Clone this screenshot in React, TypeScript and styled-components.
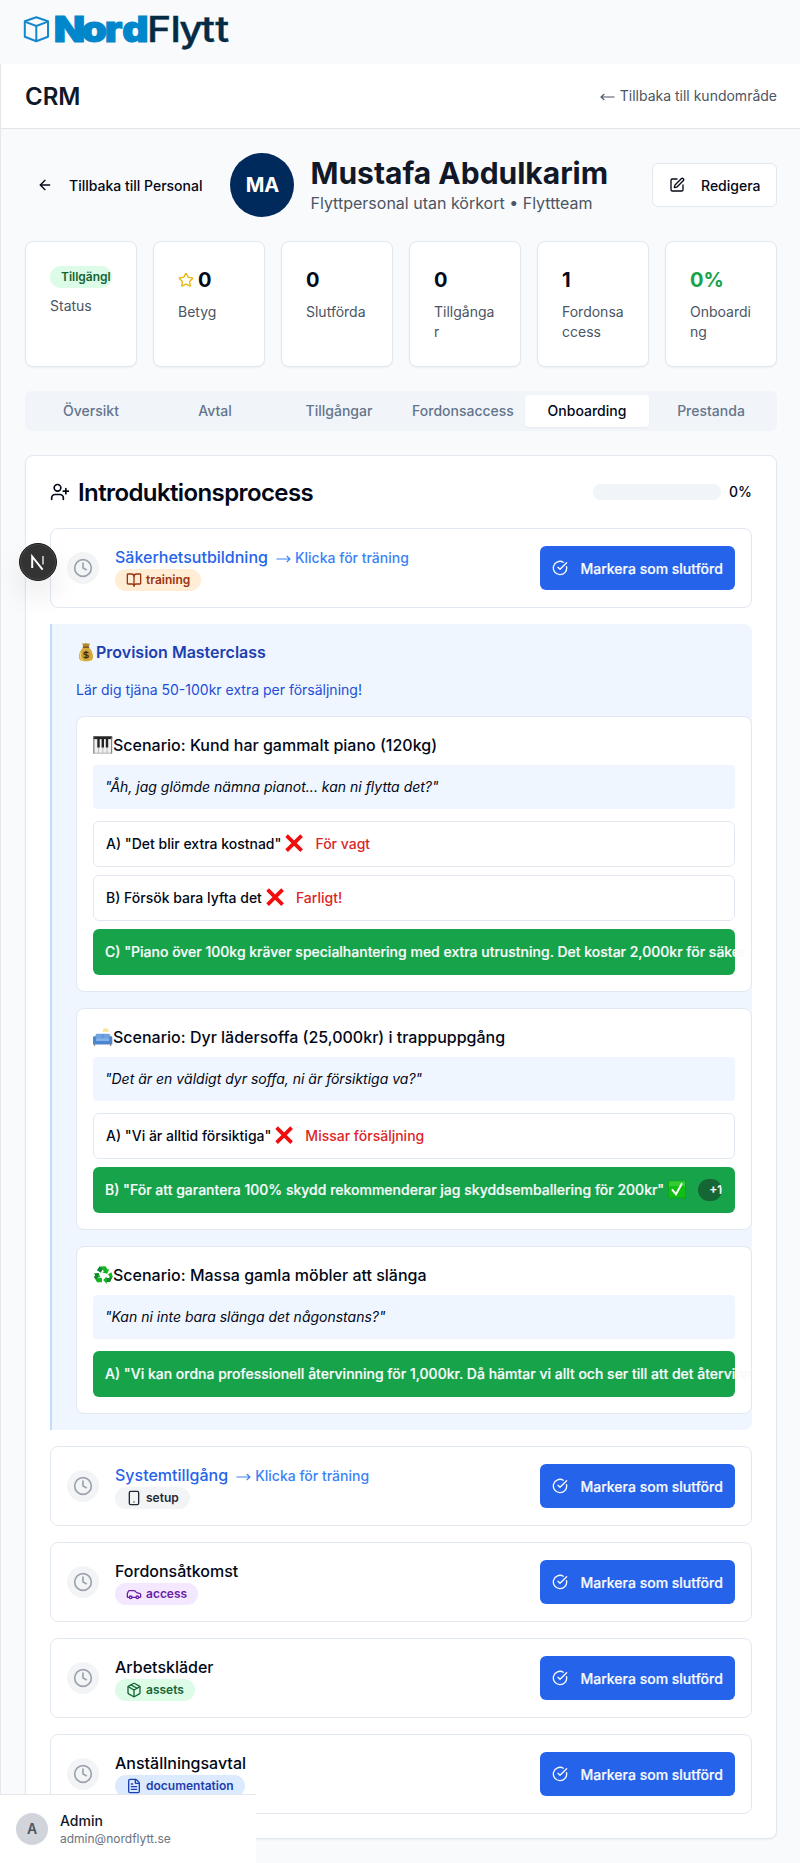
import React from 'react';
import styled, { createGlobalStyle } from 'styled-components';
import {
  ArrowLeft,
  BookOpen,
  Car,
  CircleCheckBig,
  Clock,
  FileText,
  Package,
  Smartphone,
  SquarePen,
  Star,
  UserPlus,
} from 'lucide-react';

const GlobalStyle = createGlobalStyle`
  *, *::before, *::after { box-sizing: border-box; }
  html, body { margin: 0; padding: 0; background: #f9fafb; overflow-x: hidden; }
  body {
    font-family: Inter, "Liberation Sans", sans-serif;
    font-size: 16px;
    line-height: 24px;
    color: #020817;
    -webkit-font-smoothing: antialiased;
  }
  h1, h2, h3, h4, p { margin: 0; font-weight: inherit; }
  button { font-family: inherit; margin: 0; }
  svg { flex-shrink: 0; display: block; }
`;

const Page = styled.div`
  min-height: 1863px;
  overflow: hidden;
  background: #f9fafc;
`;

const TopBar = styled.header`
  height: 64px;
`;

const Shell = styled.div`
  width: 801px;
  min-height: 1799px;
  border-left: 1px solid #e5e7eb;
`;

const AppHeader = styled.div`
  display: flex;
  align-items: center;
  justify-content: space-between;
  height: 65px;
  padding: 0 24px;
  background: #fff;
  border-bottom: 1px solid #e2e4e9;
`;

const AppTitle = styled.h1`
  padding-top: 2px;
  font-size: 24px;
  line-height: 32px;
  font-weight: 600;
  color: #111827;
`;

const HeaderLink = styled.a`
  display: flex;
  align-items: center;
  gap: 5px;
  font-size: 14px;
  line-height: 20px;
  color: #4b5563;
`;

const Main = styled.main`
  display: flex;
  flex-direction: column;
  gap: 24px;
  padding: 24px;
`;

const ProfileRow = styled.section`
  display: flex;
  align-items: center;
  gap: 16px;
  height: 64px;
`;

const GhostButton = styled.button`
  display: flex;
  align-items: center;
  gap: 16px;
  height: 44px;
  padding: 0 12px;
  border: 0;
  background: transparent;
  font-size: 14px;
  font-weight: 500;
  color: #020817;
  white-space: nowrap;
`;

const OutlineButton = styled(GhostButton)`
  width: 125px;
  margin-left: auto;
  padding: 0 16px;
  border: 1px solid #e2e8f0;
  border-radius: 6px;
  background: #fff;
`;

const Avatar = styled.div`
  display: flex;
  align-items: center;
  justify-content: center;
  width: 64px;
  height: 64px;
  border-radius: 50%;
  background: #002a5c;
  color: #fff;
  font-size: 20px;
  font-weight: 700;
`;

const PersonName = styled.h2`
  font-size: 30px;
  line-height: 36px;
  font-weight: 700;
  color: #111827;
  white-space: nowrap;
`;

const PersonRole = styled.p`
  color: #4b5563;
  white-space: nowrap;
`;

const Stats = styled.section`
  display: grid;
  grid-template-columns: repeat(6, minmax(0, 1fr));
  gap: 16px;
`;

const StatCard = styled.div`
  display: flex;
  flex-direction: column;
  gap: 8px;
  height: 126px;
  padding: 24px;
  border: 1px solid #e2e8f0;
  border-radius: 8px;
  background: #fff;
  box-shadow: 0 1px 2px rgba(0, 0, 0, 0.05);
`;

const StatValue = styled.div<{ $color?: string }>`
  display: flex;
  align-items: center;
  gap: 4px;
  font-size: 20px;
  line-height: 28px;
  font-weight: 700;
  color: ${(p) => p.$color || '#020817'};
`;

const StatLabel = styled.div`
  font-size: 14px;
  line-height: 20px;
  color: #4b5563;
  overflow-wrap: anywhere;
`;

const Badge = styled.span<{ $bg: string; $fg: string; $width?: number }>`
  display: flex;
  align-items: center;
  gap: 4px;
  height: 22px;
  width: ${(p) => (p.$width ? `${p.$width}px` : 'fit-content')};
  padding: 0 11px;
  overflow: hidden;
  border-radius: 11px;
  background: ${(p) => p.$bg};
  color: ${(p) => p.$fg};
  font-size: 12px;
  line-height: 16px;
  font-weight: 600;
  white-space: nowrap;
  flex-shrink: 0;
`;

const Tabs = styled.nav`
  display: grid;
  grid-template-columns: repeat(6, minmax(0, 1fr));
  height: 40px;
  padding: 4px;
  border-radius: 6px;
  background: #f1f5f9;
`;

const Tab = styled.div<{ $active?: boolean }>`
  display: flex;
  align-items: center;
  justify-content: center;
  border-radius: 4px;
  font-size: 14px;
  line-height: 20px;
  font-weight: 500;
  color: ${(p) => (p.$active ? '#020817' : '#64748b')};
  background: ${(p) => (p.$active ? '#fff' : 'transparent')};
  box-shadow: ${(p) => (p.$active ? '0 1px 2px rgba(0,0,0,.05)' : 'none')};
`;

const Panel = styled.section`
  display: flex;
  flex-direction: column;
  gap: 16px;
  padding: 24px;
  border: 1px solid #e2e8f0;
  border-radius: 8px;
  background: #fff;
  box-shadow: 0 1px 2px rgba(0, 0, 0, 0.05);
`;

const PanelHeader = styled.div`
  display: flex;
  align-items: center;
  gap: 8px;
  height: 24px;
  margin-bottom: 8px;
`;

const PanelTitle = styled.h3`
  margin-right: auto;
  padding-top: 2px;
  font-size: 24px;
  line-height: 24px;
  font-weight: 600;
  letter-spacing: -0.6px;
`;

const ProgressTrack = styled.div`
  width: 128px;
  height: 16px;
  border-radius: 8px;
  background: #f1f5f9;
`;

const ProgressText = styled.span`
  font-size: 14px;
  line-height: 20px;
  font-weight: 500;
`;

const StepRow = styled.div`
  display: flex;
  align-items: center;
  gap: 16px;
  height: 80px;
  padding: 0 16px;
  border: 1px solid #e2e8f0;
  border-radius: 8px;
`;

const StepIcon = styled.div`
  display: flex;
  align-items: center;
  justify-content: center;
  width: 32px;
  height: 32px;
  border-radius: 50%;
  background: #f3f4f6;
  color: #9ca3af;
`;

const StepBody = styled.div`
  flex: 1;
`;

const StepTitle = styled.h4<{ $link?: boolean }>`
  display: flex;
  align-items: center;
  gap: 8px;
  height: 24px;
  font-weight: 500;
  color: ${(p) => (p.$link ? '#2563eb' : '#020817')};
`;

const StepHint = styled.span`
  display: flex;
  align-items: center;
  gap: 4px;
  padding-top: 1px;
  font-size: 14px;
  color: #3b82f6;
`;

const PrimaryButton = styled(GhostButton)`
  width: 195px;
  gap: 12.5px;
  border-radius: 6px;
  background: #2563eb;
  color: #f8fafc;
  -webkit-text-stroke: 0.2px;
`;

const Lesson = styled.div`
  display: flex;
  flex-direction: column;
  gap: 16px;
  padding: 16px 0 16px 24px;
  border-left: 2px solid #bfdbfe;
  border-radius: 0 8px 8px 0;
  background: #eff6ff;
`;

const LessonTitle = styled.h4`
  display: flex;
  align-items: center;
  font-weight: 600;
  color: #1e40af;
`;

const LessonText = styled.p`
  font-size: 14px;
  line-height: 20px;
  color: #1d4ed8;
`;

const Scenario = styled.article`
  display: flex;
  flex-direction: column;
  gap: 8px;
  padding: 16px;
  overflow: hidden;
  border: 1px solid #e2e8f0;
  border-radius: 8px;
  background: #fff;
`;

const ScenarioTitle = styled.h4`
  display: flex;
  align-items: center;
  font-weight: 500;
`;

const Quote = styled.p`
  margin-bottom: 4px;
  padding: 12px;
  border-radius: 4px;
  background: #eff6ff;
  font-size: 14px;
  line-height: 20px;
  font-style: italic;
`;

const Answer = styled.div<{ $correct?: boolean }>`
  display: flex;
  align-items: center;
  height: 46px;
  padding: 0 12px;
  border: ${(p) => (p.$correct ? '0' : '1px solid #e2e8f0')};
  border-radius: 6px;
  background: ${(p) => (p.$correct ? '#16a34a' : '#fff')};
  color: ${(p) => (p.$correct ? '#f8fafc' : '#020817')};
  font-size: 14px;
  line-height: 20px;
  font-weight: 500;
  white-space: nowrap;
  -webkit-text-stroke: ${(p) => (p.$correct ? '0.2px' : '0')};
`;

const Verdict = styled.span<{ $color?: string }>`
  display: flex;
  align-items: center;
  gap: 12px;
  margin-left: 4px;
  color: ${(p) => p.$color || '#dc2626'};
`;

const UserBar = styled.aside`
  position: fixed;
  left: 0;
  bottom: 0;
  display: flex;
  align-items: center;
  gap: 12px;
  width: 256px;
  height: 69px;
  padding: 0 16px;
  border-top: 1px solid #e5e7eb;
  background: #fff;
`;

const UserInitial = styled.div`
  display: flex;
  align-items: center;
  justify-content: center;
  width: 32px;
  height: 32px;
  border-radius: 50%;
  background: #d1d5db;
  color: #4b5563;
  font-size: 14px;
  font-weight: 600;
`;

const UserName = styled.div`
  font-size: 14px;
  line-height: 20px;
  font-weight: 500;
  color: #111827;
`;

const UserMail = styled.div`
  font-size: 12px;
  line-height: 16px;
  color: #6b7280;
`;

const DevBadge = styled.div`
  position: fixed;
  left: 19px;
  top: 543px;
  display: flex;
  align-items: center;
  justify-content: center;
  width: 38px;
  height: 38px;
  border: 1px solid #171717;
  border-radius: 50%;
  background: #333;
  box-shadow: inset 0 0 0 1px #494949, 0 16px 32px -8px rgba(0, 0, 0, 0.24);
`;

function Logo() {
  return (
    <svg width="240" height="64" viewBox="0 0 240 64">
      <g fill="none" stroke="#1587cb" strokeWidth="2" strokeLinejoin="round">
        <path d="M36.3 17.3 48 21.3V36.8L36.3 41.3 24.8 36.8V21.3Z" />
        <path d="M24.8 21.6 36.3 26 48 21.6M36.3 26V41" />
      </g>
      <g transform="scale(1.15 1)" fontSize="35.5">
        <text x="46.8 70.8 91 106.4" y="41.800" fontWeight="900" fill="#0086cb" stroke="#0086cb" strokeWidth="1">
          Nord
        </text>
        <text x="127.800 148.200 155.900 174.800 187.200" y="41.800" fontWeight="500" fill="#052c44" stroke="#052c44" strokeWidth=".4">
          Flytt
        </text>
      </g>
    </svg>
  );
}

function LongArrow({ back }: { back?: boolean }) {
  return (
    <svg width="15" height="10" viewBox="0 0 15 10" fill="none" stroke="currentColor" strokeWidth="1.100">
      <path d={back ? 'M14.500 6H1.500M4.300 3 1 6l3.300 3' : 'M.5 6H13.500M10.700 3 14 6l-3.300 3'} />
    </svg>
  );
}

function MoneyBag() {
  return (
    <svg width="20" height="20" viewBox="0 0 20 20">
      <path d="M6 1.2 8 1.8 10 .9 12 1.8 14 1.2 12.5 5h-5Z" fill="#b58a2c" />
      <path d="M7.4 5.2C4.4 8 2.6 11.6 3 15.5c.2 2.8 2.4 3.8 7 3.8s6.800-1 7-3.800c.4-3.900-1.400-7.500-4.400-10.300Z" fill="#d6a93c" />
      <path d="M5 10.500C3.800 14 4 17.500 7 18" stroke="#f0cf72" strokeWidth="1.300" fill="none" />
      <path d="M6.800 5.200h6.400" stroke="#7b5520" strokeWidth="1.500" />
      <circle cx="10" cy="12.800" r="4.300" fill="#c69a31" />
      <path d="M12.300 10.900c-.8-1-4.300-1.200-4.300.5 0 1.800 4.400.9 4.400 2.900 0 1.800-3.600 1.700-4.700.5M10.100 8.900v7.900" fill="none" stroke="#3e3113" strokeWidth="1.200" />
    </svg>
  );
}

function Piano() {
  return (
    <svg width="20" height="20" viewBox="0 0 20 20">
      <rect x=".5" y="1.500" width="18.500" height="17.500" fill="#c9c9c9" />
      <rect x="1.500" y="4" width="16.500" height="13.500" fill="#efefef" />
      <path d="M5.500 12v6M9.800 12v6M14 12v6" stroke="#aaa" strokeWidth=".7" />
      <rect x=".3" y="1.300" width="18.900" height="2.800" fill="#242424" />
      <path d="M5.500 3v9.500M9.800 3v9.500M14 3v9.500" stroke="#222" strokeWidth="2.400" />
      <path d="M.8 2v16.500M18.700 2v16.500" stroke="#777" strokeWidth="1" />
    </svg>
  );
}

function Couch() {
  return (
    <svg width="20" height="20" viewBox="0 0 20 20">
      <path d="M10.500 1.500h4l1 3.200h-6Z" fill="#fbe38e" />
      <path d="M14 3c3 0 4 2 4 4v12" stroke="#e6e2da" strokeWidth=".6" fill="none" />
      <rect x="2.500" y="6.800" width="14.500" height="8" rx="1.500" fill="#6fa3df" />
      <path d="M9.800 7v6" stroke="#4f83c4" strokeWidth=".7" />
      <rect x="3" y="11.500" width="13.500" height="3" fill="#85b4ea" />
      <path d="M0 10.500c0-1.600 3.200-1.600 3.200 0V14h13V10.500c0-1.600 3.100-1.600 3.100 0V17.500H0Z" fill="#4b86cf" />
      <path d="M1.500 17.500v1.300M17.500 17.500v1.300" stroke="#765437" strokeWidth="1.200" />
    </svg>
  );
}

function Recycle() {
  return (
    <svg width="20" height="20" viewBox="0 0 20 20">
      <path d="m6.500 1.500 6-.2 2 3.200 1.800-.6-2 4.800-5-1.200 1.600-1-1.300-2.200-2 3.200-3.500-2.200Z" fill="#12b51f" />
      <path d="m6.500 1.500 3.200 2.800-2 3.200-3.500-2.200Z" fill="#16843a" />
      <path d="m15 9.200 3.400-1.900 1.400 4.500-2.800 5.200h-3.200v1.900L10.200 15l3.500-3.600v1.700h2.200l.8-1.300Z" fill="#12b51f" />
      <path d="M13.800 13.100h3l2.300-1.300-2.100 5.200h-3.200Z" fill="#16843a" />
      <path d="m1 8.700 4.700-.8 1.900 4.800-1.700-.8-.8 1.200h3.800v4.100H4.100L1 12.300l1.300-2.100Z" fill="#12b51f" />
      <path d="m1 12.300 1.300-2.100-1.300-1.500 4.700-.8-.8 3.600-1.300 2.500Z" fill="#16843a" />
    </svg>
  );
}

function Cross() {
  return (
    <svg width="18" height="20" viewBox="0 0 18 20">
      <path d="m1.600 1.600 15 15M16.600 1.600l-15 15" stroke="#f20d0d" strokeWidth="3.700" />
    </svg>
  );
}

function CheckBox() {
  return (
    <svg width="18" height="20" viewBox="0 0 18 20">
      <rect x=".3" y=".8" width="17.400" height="17.400" rx="1.500" fill="#08a80d" />
      <rect x="1" y="1.300" width="16" height="8" rx="1" fill="#33cc33" />
      <rect x="1" y="6" width="16" height="11.500" rx="1" fill="#12bd14" />
      <path d="m4 9.300 4 5 6-11" stroke="#fff" strokeWidth="2" fill="none" />
    </svg>
  );
}

function NextMark() {
  return (
    <svg width="38" height="38" viewBox="0 0 38 38">
      <path d="M13.200 25V13.500L23.600 26.600" fill="none" stroke="#fff" strokeWidth="2" />
      <path d="M24 13v8.500" stroke="#fff" strokeOpacity=".75" strokeWidth="1.700" />
    </svg>
  );
}

type StepProps = {
  title: string;
  link?: boolean;
  tag: string;
  icon: React.ReactNode;
  bg: string;
  fg: string;
};

function Step({ title, link, tag, icon, bg, fg }: StepProps) {
  return (
    <StepRow>
      <StepIcon>
        <Clock size={20} />
      </StepIcon>
      <StepBody>
        <StepTitle $link={link}>
          {title}
          {link && (
            <StepHint>
              <LongArrow />
              Klicka för träning
            </StepHint>
          )}
        </StepTitle>
        <Badge $bg={bg} $fg={fg}>
          {icon}
          {tag}
        </Badge>
      </StepBody>
      <PrimaryButton>
        <CircleCheckBig size={16} />
        Markera som slutförd
      </PrimaryButton>
    </StepRow>
  );
}

const tabs = ['Översikt', 'Avtal', 'Tillgångar', 'Fordonsaccess', 'Onboarding', 'Prestanda'];

export default function App() {
  return (
    <Page>
      <GlobalStyle />
      <TopBar>
        <Logo />
      </TopBar>
      <Shell>
        <AppHeader>
          <AppTitle>CRM</AppTitle>
          <HeaderLink>
            <LongArrow back />
            Tillbaka till kundområde
          </HeaderLink>
        </AppHeader>
        <Main>
          <ProfileRow>
            <GhostButton>
              <ArrowLeft size={16} />
              Tillbaka till Personal
            </GhostButton>
            <Avatar>MA</Avatar>
            <div>
              <PersonName>Mustafa Abdulkarim</PersonName>
              <PersonRole>Flyttpersonal utan körkort • Flyttteam</PersonRole>
            </div>
            <OutlineButton>
              <SquarePen size={16} />
              Redigera
            </OutlineButton>
          </ProfileRow>

          <Stats>
            <StatCard>
              <Badge $bg="#dcfce7" $fg="#166534" $width={62}>
                Tillgängl
              </Badge>
              <StatLabel>Status</StatLabel>
            </StatCard>
            <StatCard>
              <StatValue>
                <Star size={16} color="#eab308" />0
              </StatValue>
              <StatLabel>Betyg</StatLabel>
            </StatCard>
            <StatCard>
              <StatValue>0</StatValue>
              <StatLabel>Slutförda</StatLabel>
            </StatCard>
            <StatCard>
              <StatValue>0</StatValue>
              <StatLabel>Tillgångar</StatLabel>
            </StatCard>
            <StatCard>
              <StatValue>1</StatValue>
              <StatLabel>Fordonsaccess</StatLabel>
            </StatCard>
            <StatCard>
              <StatValue $color="#16a34a">0%</StatValue>
              <StatLabel>Onboarding</StatLabel>
            </StatCard>
          </Stats>

          <Tabs>
            {tabs.map((t) => (
              <Tab key={t} $active={t === 'Onboarding'}>
                {t}
              </Tab>
            ))}
          </Tabs>

          <Panel>
            <PanelHeader>
              <UserPlus size={20} />
              <PanelTitle>Introduktionsprocess</PanelTitle>
              <ProgressTrack />
              <ProgressText>0%</ProgressText>
            </PanelHeader>

            <Step title="Säkerhetsutbildning" link tag="training" icon={<BookOpen size={16} />} bg="#ffedd5" fg="#9a3412" />

            <Lesson>
              <LessonTitle>
                <MoneyBag />
                Provision Masterclass
              </LessonTitle>
              <LessonText>Lär dig tjäna 50-100kr extra per försäljning!</LessonText>

              <Scenario>
                <ScenarioTitle>
                  <Piano />
                  Scenario: Kund har gammalt piano (120kg)
                </ScenarioTitle>
                <Quote>"Åh, jag glömde nämna pianot... kan ni flytta det?"</Quote>
                <Answer>
                  A) "Det blir extra kostnad"
                  <Verdict>
                    <Cross />
                    För vagt
                  </Verdict>
                </Answer>
                <Answer>
                  B) Försök bara lyfta det
                  <Verdict>
                    <Cross />
                    Farligt!
                  </Verdict>
                </Answer>
                <Answer $correct>
                  C) "Piano över 100kg kräver specialhantering med extra utrustning. Det kostar 2,000kr för säker
                </Answer>
              </Scenario>

              <Scenario>
                <ScenarioTitle>
                  <Couch />
                  Scenario: Dyr lädersoffa (25,000kr) i trappuppgång
                </ScenarioTitle>
                <Quote>"Det är en väldigt dyr soffa, ni är försiktiga va?"</Quote>
                <Answer>
                  A) "Vi är alltid försiktiga"
                  <Verdict>
                    <Cross />
                    Missar försäljning
                  </Verdict>
                </Answer>
                <Answer $correct>
                  B) "För att garantera 100% skydd rekommenderar jag skyddsemballering för 200kr"
                  <Verdict $color="#f8fafc">
                    <CheckBox />
                    <Badge $bg="#166534" $fg="#f8fafc" $width={24}>
                      +1
                    </Badge>
                  </Verdict>
                </Answer>
              </Scenario>

              <Scenario>
                <ScenarioTitle>
                  <Recycle />
                  Scenario: Massa gamla möbler att slänga
                </ScenarioTitle>
                <Quote>"Kan ni inte bara slänga det någonstans?"</Quote>
                <Answer $correct>
                  A) "Vi kan ordna professionell återvinning för 1,000kr. Då hämtar vi allt och ser till att det återvinn
                </Answer>
              </Scenario>
            </Lesson>

            <Step title="Systemtillgång" link tag="setup" icon={<Smartphone size={16} />} bg="#f3f4f6" fg="#1f2937" />
            <Step title="Fordonsåtkomst" tag="access" icon={<Car size={16} />} bg="#f3e8ff" fg="#6b21a8" />
            <Step title="Arbetskläder" tag="assets" icon={<Package size={16} />} bg="#dcfce7" fg="#166534" />
            <Step title="Anställningsavtal" tag="documentation" icon={<FileText size={16} />} bg="#dbeafe" fg="#1e40af" />
          </Panel>
        </Main>
      </Shell>

      <UserBar>
        <UserInitial>A</UserInitial>
        <div>
          <UserName>Admin</UserName>
          <UserMail>admin@nordflytt.se</UserMail>
        </div>
      </UserBar>
      <DevBadge>
        <NextMark />
      </DevBadge>
    </Page>
  );
}
